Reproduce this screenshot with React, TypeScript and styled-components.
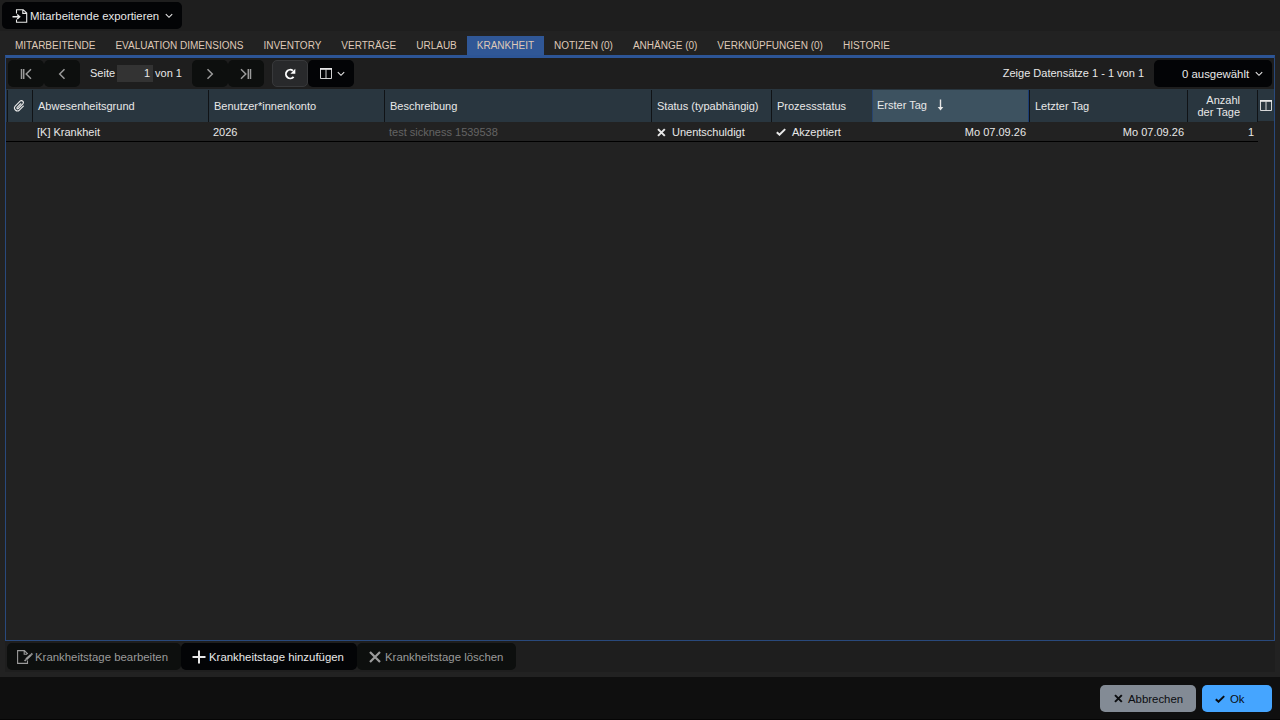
import React from "react";
import styled, { createGlobalStyle, css } from "styled-components";

const GlobalStyle = createGlobalStyle`
  *, *::before, *::after { box-sizing: border-box; }
  body {
    margin: 0;
    background: #222;
    color: #e8e8e8;
    font: 11px/13px "Liberation Sans", Arial, sans-serif;
    overflow: hidden;
  }
  svg { display: block; flex: none; }
`;

const Page = styled.div`
  display: flex;
  flex-direction: column;
  width: 1280px;
  height: 720px;
`;

const TopBar = styled.header`
  display: flex;
  height: 31px;
  padding: 2px;
  background: #1e1e1e;
`;

const Button = styled.button<{ $w: number; $disabled?: boolean; $focus?: boolean }>`
  display: flex;
  align-items: center;
  justify-content: center;
  width: ${(p) => p.$w}px;
  height: 27px;
  flex: none;
  padding: 0;
  border: 0;
  border-radius: 5px;
  background: #030406;
  color: #e8e8e8;
  font: 11.4px/14px "Liberation Sans", Arial, sans-serif;
  white-space: nowrap;
  ${(p) => p.$disabled && css`background: #0d0f0e; color: #9b9b9b;`}
  ${(p) => p.$focus && css`background: #28292b; border: 1px solid #38393b; color: #fff;`}
`;

const IconButton = styled(Button)`
  gap: 5px;
`;

const LabelButton = styled(Button)<{ $left: number; $gap: number }>`
  justify-content: flex-start;
  padding-left: ${(p) => p.$left}px;
  gap: ${(p) => p.$gap}px;
`;

const ChevronSlot = styled.span`
  margin-left: 4px;
`;

const Tabs = styled.nav`
  display: flex;
  align-items: flex-end;
  height: 24px;
  padding: 0 5px;
`;

const Tab = styled.div<{ $active?: boolean }>`
  height: 19px;
  padding: 0 10px;
  font-size: 10px;
  line-height: 19px;
  color: #dfc9b8;
  white-space: nowrap;
  background: ${(p) => (p.$active ? "#305796" : "transparent")};
`;

const Body = styled.main`
  display: flex;
  flex-direction: column;
  height: 617px;
  margin: 0 5px;
  background: #1e1e1e;
`;

const Panel = styled.section`
  display: flex;
  flex-direction: column;
  height: 586px;
  border: 1px solid #29497c;
  border-top: 3px solid #2d5596;
  background: #222;
`;

const Pager = styled.div`
  display: flex;
  align-items: center;
  height: 31px;
  padding: 0 2px;
  background: #1e1e1e;
`;

const PageField = styled.div`
  display: flex;
  align-items: center;
  width: 112px;
  padding-left: 10px;
  white-space: nowrap;
`;

const PageNumber = styled.span`
  width: 36px;
  height: 17px;
  margin: 0 2px;
  padding-right: 3px;
  background: #333;
  text-align: right;
  line-height: 17px;
`;

const Spaced = styled.div`
  display: flex;
  margin-left: 8px;
`;

const Summary = styled.span`
  margin-left: auto;
  margin-right: 10px;
`;

const COLUMNS = "27px 176px 176px 267px 120px 100px 158px 158px 70px";

const HeadLine = styled.div`
  display: flex;
  height: 33px;
`;

const HeadRow = styled.div`
  display: grid;
  grid-template-columns: ${COLUMNS};
  width: 1252px;
  height: 33px;
  padding-top: 1px;
  background: #29363f;
`;

const HeadCell = styled.div<{ $sorted?: boolean; $right?: boolean; $plain?: boolean; $first?: boolean }>`
  display: flex;
  align-items: center;
  padding-left: 5px;
  line-height: 12px;
  border-right: 1px solid ${(p) => (p.$plain ? "#29363f" : "#101316")};
  ${(p) => p.$sorted && css`
    background: #3d5260;
    border-left: 1px solid #27446f;
    border-right: 1px solid #1b3d75;
    box-shadow: 1px 0 #101316;
    padding-bottom: 2px;
    padding-left: 4px;
    gap: 10px;
    margin-right: 1px;
  `}
  ${(p) => p.$right && css`justify-content: flex-end; padding-right: 17px; text-align: right;`}
  ${(p) => p.$first && css`border-left: 1px solid #101316; margin-left: 1px; padding-left: 5px;`}
`;

const ColumnPicker = styled.div`
  display: flex;
  align-items: center;
  justify-content: center;
  width: 16px;
  height: 32px;
  background: #29363f;
`;

const Row = styled.div`
  display: grid;
  grid-template-columns: ${COLUMNS};
  width: 1252px;
  height: 20px;
  border-bottom: 1px solid #000;
`;

const Cell = styled.div<{ $right?: boolean; $muted?: boolean }>`
  display: flex;
  align-items: center;
  padding: 2px 4px 0;
  gap: 6px;
  white-space: nowrap;
  justify-content: ${(p) => (p.$right ? "flex-end" : "flex-start")};
  color: ${(p) => (p.$muted ? "#646464" : "inherit")};

  svg { margin-bottom: 1px; }
`;

const Actions = styled.div`
  display: flex;
  padding: 2px 2px 0;
`;

const Footer = styled.footer`
  display: flex;
  justify-content: flex-end;
  gap: 6px;
  height: 43px;
  margin-top: auto;
  padding: 8px 8px 0;
  background: #0f0f0f;
  border-bottom: 1px solid #050505;
`;

const DialogButton = styled(LabelButton)<{ $bg: string }>`
  background: ${(p) => p.$bg};
  color: #0b0d10;
`;

type StrokeProps = { w: number; h: number; d: string; sw?: number };

const Stroke = ({ w, h, d, sw = 1 }: StrokeProps) => (
  <svg width={w} height={h} viewBox={`0 0 ${w} ${h}`} fill="none" stroke="currentColor" strokeWidth={sw}>
    <path d={d} />
  </svg>
);

const Chevron = () => <Stroke w={8} h={6} d="M.8 1.2 4 4.3 7.2 1.2" sw={1.1} />;
const First = () => <Stroke w={12} h={12} d="M1.5 1v10M3.7 1v10M11 1.2 6.2 6 11 10.8" sw={1.5} />;
const Last = () => <Stroke w={12} h={12} d="M10.5 1v10M8.3 1v10M1 1.2 5.8 6 1 10.8" sw={1.5} />;
const Prev = () => <Stroke w={8} h={12} d="M6.5 1.2 1.7 6 6.5 10.8" sw={1.5} />;
const Next = () => <Stroke w={8} h={12} d="M1.5 1.2 6.3 6 1.5 10.8" sw={1.5} />;
const Cross = () => <Stroke w={10} h={9} d="M2 1.1 8.8 7.9M8.8 1.1 2 7.9" sw={2} />;
const Check = () => <Stroke w={10} h={8} d="M.8 4.2 3.5 6.7 9.2 1.1" sw={2} />;

const Columns = () => (
  <svg width="12" height="11" viewBox="0 0 12 11" fill="none" stroke="currentColor">
    <path d="M.5 1v9.5h11V1M6 1.5v9" strokeOpacity=".9" />
    <path d="M0 .9h12" strokeWidth="1.8" />
  </svg>
);

const Refresh = () => (
  <svg width="12" height="12" viewBox="0 0 12 12" fill="none">
    <path d="M9.6 8.8A4.3 4.3 0 1 1 8.9 2.7" stroke="currentColor" strokeWidth="1.9" />
    <path d="M11.3.8v5H6.4z" fill="currentColor" />
  </svg>
);

const ExportDoc = () => (
  <svg width="16" height="14" viewBox="0 0 16 14" fill="none" stroke="currentColor">
    <path d="M4.5 4.5V.7h6.7l3.5 3.3v9.3H4.5v-2.8M10.8.8v3.6h3.8" strokeWidth="1.1" />
    <path d="M.5 7.8h6.7M5.2 5.5l2.5 2.3-2.5 2.3" strokeWidth="1.4" />
  </svg>
);

const EditDoc = () => (
  <svg width="16" height="14" viewBox="0 0 16 14" fill="none" stroke="currentColor">
    <path d="M10.5 4V3.8L7.4.6H.6v12.8h9.9v-3M7.2.8v3.4h3" strokeWidth="1.1" />
    <path d="m9.1 9.4 5-4.7" strokeWidth="2.2" />
    <path d="m14.2 4.6 1.2-1.1M7.6 11l1.4-1.4" strokeWidth="1.7" />
  </svg>
);

const Clip = () => (
  <svg width="12" height="12" viewBox="0 0 24 24" fill="none" stroke="currentColor" strokeWidth="2.3"
    strokeLinecap="round" strokeLinejoin="round">
    <path d="M15.5 7.5 8.3 14.7a1.6 1.6 0 0 0 2.3 2.3l9.1-9.2a3.9 3.9 0 0 0-5.5-5.5L4.4 12.1a5.9 5.9 0 0 0 8.3 8.3l8-8" />
  </svg>
);

const ArrowDown = () => (
  <svg width="7" height="12" viewBox="0 0 7 12" fill="none">
    <path d="M3.5.5v9" stroke="currentColor" strokeWidth="1.4" />
    <path d="M.7 8h5.6L3.5 11.5z" fill="currentColor" />
  </svg>
);

const TABS = ["Mitarbeitende", "Evaluation Dimensions", "Inventory", "Verträge", "Urlaub", "Krankheit",
  "Notizen (0)", "Anhänge (0)", "Verknüpfungen (0)", "Historie"];

export default function App() {
  return (
    <Page>
      <GlobalStyle />
      <TopBar>
        <LabelButton $w={180} $left={10} $gap={2}>
          <ExportDoc />
          Mitarbeitende exportieren
          <ChevronSlot><Chevron /></ChevronSlot>
        </LabelButton>
      </TopBar>
      <Tabs>
        {TABS.map((name) => (
          <Tab key={name} $active={name === "Krankheit"}>{name.toUpperCase()}</Tab>
        ))}
      </Tabs>
      <Body>
        <Panel>
          <Pager>
            <IconButton $w={36} $disabled><First /></IconButton>
            <IconButton $w={36} $disabled><Prev /></IconButton>
            <PageField>Seite<PageNumber>1</PageNumber>von 1</PageField>
            <IconButton $w={36} $disabled><Next /></IconButton>
            <IconButton $w={36} $disabled><Last /></IconButton>
            <Spaced>
              <IconButton $w={36} $focus><Refresh /></IconButton>
              <LabelButton $w={46} $left={12} $gap={5}><Columns /><Chevron /></LabelButton>
            </Spaced>
            <Summary>Zeige Datensätze 1 - 1 von 1</Summary>
            <LabelButton $w={118} $left={28} $gap={2}>
              0 ausgewählt
              <ChevronSlot><Chevron /></ChevronSlot>
            </LabelButton>
          </Pager>
          <HeadLine>
            <HeadRow>
              <HeadCell $first><Clip /></HeadCell>
              <HeadCell>Abwesenheitsgrund</HeadCell>
              <HeadCell>Benutzer*innenkonto</HeadCell>
              <HeadCell>Beschreibung</HeadCell>
              <HeadCell>Status (typabhängig)</HeadCell>
              <HeadCell $plain>Prozessstatus</HeadCell>
              <HeadCell $sorted>Erster Tag<ArrowDown /></HeadCell>
              <HeadCell>Letzter Tag</HeadCell>
              <HeadCell $right>Anzahl<br />der Tage</HeadCell>
            </HeadRow>
            <ColumnPicker><Columns /></ColumnPicker>
          </HeadLine>
          <Row>
            <Cell />
            <Cell>[K] Krankheit</Cell>
            <Cell>2026</Cell>
            <Cell $muted>test sickness 1539538</Cell>
            <Cell><Cross />Unentschuldigt</Cell>
            <Cell><Check />Akzeptiert</Cell>
            <Cell $right>Mo 07.09.26</Cell>
            <Cell $right>Mo 07.09.26</Cell>
            <Cell $right>1</Cell>
          </Row>
        </Panel>
        <Actions>
          <LabelButton $w={174} $left={10} $gap={2} $disabled><EditDoc />Krankheitstage bearbeiten</LabelButton>
          <LabelButton $w={176} $left={11} $gap={3}>
            <Stroke w={14} h={14} d="M7 .5v13M.5 7h13" sw={2} />
            Krankheitstage hinzufügen
          </LabelButton>
          <LabelButton $w={159} $left={12} $gap={4} $disabled>
            <Stroke w={12} h={12} d="M1 1l10 10M11 1 1 11" sw={2.2} />
            Krankheitstage löschen
          </LabelButton>
        </Actions>
      </Body>
      <Footer>
        <DialogButton $w={96} $left={13} $gap={5} $bg="#838b95"><Cross />Abbrechen</DialogButton>
        <DialogButton $w={70} $left={13} $gap={5} $bg="#45a5ff"><Check />Ok</DialogButton>
      </Footer>
    </Page>
  );
}
